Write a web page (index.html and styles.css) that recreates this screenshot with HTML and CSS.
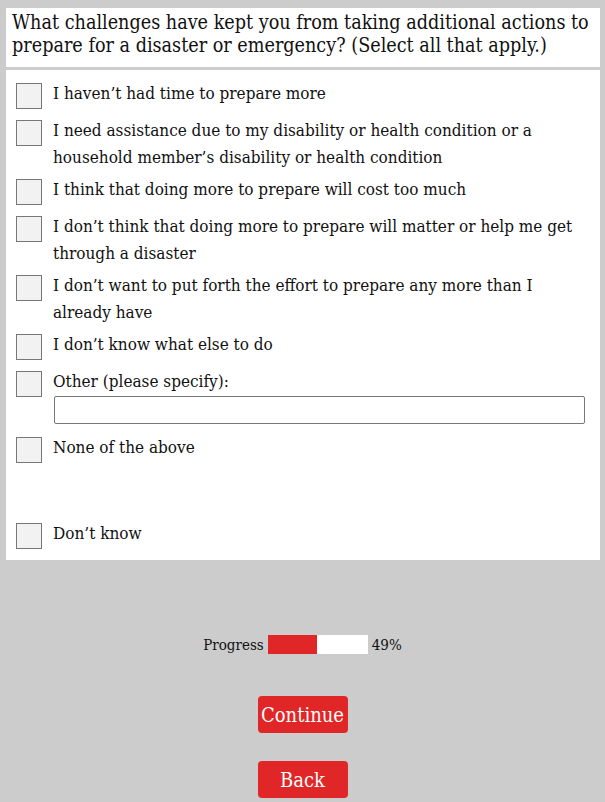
FILE: index.html
```html
<!DOCTYPE html>
<html lang="en">
<head>
    <meta charset="UTF-8">
    <meta name="viewport" content="width=device-width, initial-scale=1.0">
    <title>Survey - Preparedness</title>
    <link rel="stylesheet" href="styles.css">
</head>
<body>
    <div class="survey">
        <div class="question">
            What challenges have kept you from taking additional actions to prepare for a disaster or emergency? (Select all that apply.)
        </div>
        <ul class="options">
            <li class="option"><span class="box"></span><span class="label">I haven’t had time to prepare more</span></li>
            <li class="option"><span class="box"></span><span class="label">I need assistance due to my disability or health condition or a household member’s disability or health condition</span></li>
            <li class="option"><span class="box"></span><span class="label">I think that doing more to prepare will cost too much</span></li>
            <li class="option"><span class="box"></span><span class="label">I don’t think that doing more to prepare will matter or help me get through a disaster</span></li>
            <li class="option"><span class="box"></span><span class="label">I don’t want to put forth the effort to prepare any more than I already have</span></li>
            <li class="option"><span class="box"></span><span class="label">I don’t know what else to do</span></li>
            <li class="option"><span class="box"></span>
                <span class="label">Other (please specify):
                    <input type="text" class="other-input">
                </span>
            </li>
            <li class="option"><span class="box"></span><span class="label">None of the above</span></li>
            <li class="option spaced"><span class="box"></span><span class="label">Don’t know</span></li>
        </ul>
    </div>

    <div class="progress">
        <span>Progress</span>
        <div class="bar"><div class="fill" style="width: 49%"></div></div>
        <span>49%</span>
    </div>

    <div class="nav">
        <button class="btn">Continue</button>
        <button class="btn">Back</button>
    </div>
</body>
</html>
```

FILE: styles.css
```css
body {
    margin: 0;
    background-color: #cccccc;
    font-family: "DejaVu Serif Condensed", "DejaVu Serif", serif;
    font-stretch: condensed;
    color: #111111;
}
.survey {
    margin: 8px 5px 0 6px;
}
.question {
    background-color: #ffffff;
    padding: 3px 6px 10px 6px;
    font-size: 19.6px;
    line-height: 23px;
    margin-bottom: 3px;
}
.options {
    list-style: none;
    margin: 0;
    padding: 10px 16px 8px 10px;
    background-color: #ffffff;
}
.option {
    display: flex;
    align-items: flex-start;
    margin-bottom: 5px;
}
.option:nth-child(4) {
    margin-top: 1px;
}
.option:last-child {
    margin-bottom: 0;
}
.option.spaced {
    margin-top: 54px;
}
.box {
    flex: none;
    width: 24px;
    height: 24px;
    margin: 3px 11px 3px 0;
    border: 1px solid #777777;
    background-color: #f2f2f2;
}
.label {
    flex: 1;
    font-size: 17px;
    line-height: 27px;
}
.other-input {
    display: block;
    box-sizing: border-box;
    width: 100%;
    height: 28px;
    margin: 1px 0 5px 1px;
    border: 1px solid #777777;
    border-radius: 2px;
}
.progress {
    display: flex;
    align-items: center;
    justify-content: center;
    gap: 4px;
    margin-top: 75px;
    font-size: 15px;
}
.bar {
    width: 100px;
    height: 19px;
    background-color: #ffffff;
}
.fill {
    height: 100%;
    background-color: #e02626;
}
.nav {
    display: flex;
    flex-direction: column;
    align-items: center;
    gap: 28px;
    margin-top: 42px;
}
.btn {
    width: 90px;
    height: 37px;
    border: none;
    border-radius: 4px;
    background-color: #e02626;
    color: #ffffff;
    font-family: "DejaVu Serif Condensed", "DejaVu Serif", serif;
    font-stretch: condensed;
    font-size: 20px;
    padding: 0;
}
```
